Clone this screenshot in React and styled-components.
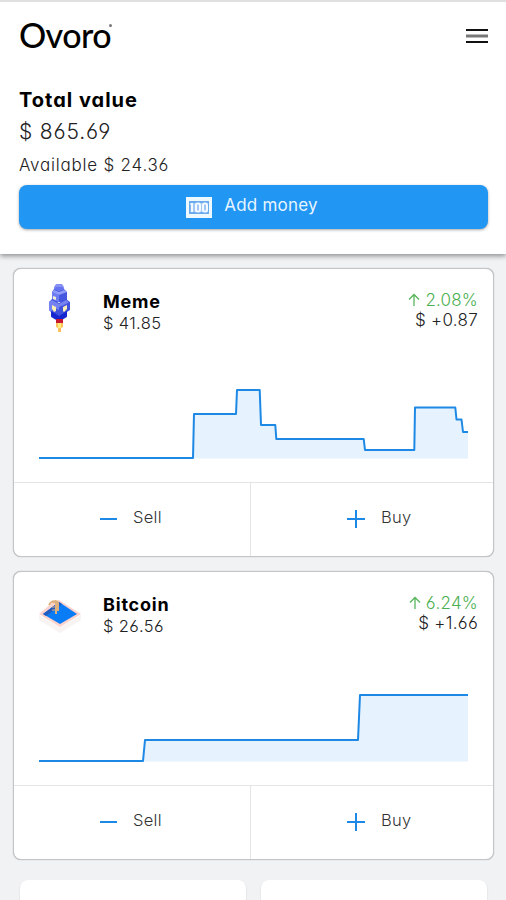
import React from "react";
import styled, { createGlobalStyle } from "styled-components";

const GlobalStyle = createGlobalStyle`
  * {
    box-sizing: border-box;
  }
  body {
    margin: 0;
    background: #f0f2f4;
    color: #111;
    font-family: Inter, "Open Sans", sans-serif;
    font-feature-settings: "cv11", "cv03", "cv04";
    font-weight: 300;
  }
`;

const Screen = styled.div`
  height: 900px;
  overflow: hidden;
`;

const HeaderWrapper = styled.header`
  height: 254px;
  padding: 0 18px 0 19px;
  background: #fff;
  border-top: 2px solid #e0e0e0;
  box-shadow: 0 2px 5px rgba(0, 0, 0, 0.42);
`;

const TopBar = styled.div`
  display: flex;
  justify-content: space-between;
  align-items: center;
  height: 68px;
  margin-bottom: 16px;
`;

const Logo = styled.div`
  display: flex;
  margin-bottom: 2px;
  font-family: Lato, sans-serif;
  font-size: 34px;
  font-weight: 500;
  line-height: 40px;
  letter-spacing: -0.6px;
  color: #000;
`;

const LogoDot = styled.i`
  width: 3px;
  height: 3px;
  margin-top: 9px;
  margin-left: -2px;
  border-radius: 50%;
  background: #777;
`;

const MenuButton = styled.button`
  display: flex;
  padding: 0;
  border: 0;
  background: none;
`;

const Text = styled.div`
  font-size: ${(props) => props.$size || 17}px;
  font-weight: ${(props) => (props.$bold ? 700 : 300)};
  line-height: ${(props) => props.$line || 22}px;
  letter-spacing: ${(props) => props.$spacing || 0}px;
  color: ${(props) => props.$color || "#222"};
  white-space: nowrap;
`;

const AddButton = styled.button`
  display: flex;
  justify-content: center;
  align-items: center;
  gap: 12px;
  width: 100%;
  height: 44px;
  margin-top: 3px;
  padding: 0 3px 0 0;
  border: 0;
  border-radius: 8px;
  background: #2196f3;
  box-shadow: 0 1px 3px rgba(0, 0, 0, 0.35);
  font-family: inherit;
  font-feature-settings: inherit;
`;

const AddLabel = styled.span`
  margin-bottom: 4px;
  font-size: 17px;
  font-weight: 400;
  line-height: 22px;
  letter-spacing: 0.2px;
  color: #e6f5ff;
`;

const CardList = styled.main`
  display: flex;
  flex-direction: column;
  gap: 14px;
  padding: 14px 12px 0 13px;
`;

const CardWrapper = styled.section`
  height: 289px;
  background: #fff;
  border: 1px solid #c3c6c8;
  border-radius: 8px;
  box-shadow: 0 0 1px rgba(0, 0, 0, 0.35);
`;

const CardHead = styled.div`
  display: flex;
  height: 101px;
  padding: 0 15px 0 25px;
`;

const AssetIcon = styled.div`
  width: 64px;
  padding-top: 11px;
`;

const AssetInfo = styled.div`
  flex: 1;
  padding-top: 22px;
`;

const AssetChange = styled.div`
  display: flex;
  flex-direction: column;
  align-items: flex-end;
  padding-top: 21px;
`;

const Rise = styled.div`
  display: flex;
  align-items: center;
  gap: 5px;
`;

const ChartWrapper = styled.div`
  height: 112px;
  padding-left: 25px;
`;

const Actions = styled.div`
  display: grid;
  grid-template-columns: 236px 1fr;
  height: 74px;
  border-top: 1px solid #e3e5e6;
`;

const Action = styled.button`
  display: flex;
  align-items: center;
  gap: 16px;
  padding: 0 0 1px ${(props) => props.$inset}px;
  border: 0;
  border-left: ${(props) => (props.$divided ? "1px solid #e3e5e6" : "0")};
  background: none;
  font-family: inherit;
  font-feature-settings: inherit;
`;

const ActionLabel = styled.span`
  margin-bottom: 4px;
  font-size: 16.5px;
  font-weight: 300;
  line-height: 22px;
  letter-spacing: 0.3px;
  color: #333;
`;

const Tiles = styled.div`
  display: grid;
  grid-template-columns: 1fr 1fr;
  gap: 15px;
  padding: 20px 19px 0 20px;
`;

const Tile = styled.div`
  height: 60px;
  border-radius: 8px;
  background: #fff;
  box-shadow: 0 1px 2px rgba(0, 0, 0, 0.14);
`;

const MenuIcon = () => (
  <svg width="22" height="16" viewBox="0 0 22 16">
    <path d="M0 1h22v2H0zM0 13h22v2H0z" fill="#111" />
    <path d="M0 6.5h22v3H0z" fill="#777" />
  </svg>
);

const MoneyIcon = () => (
  <svg width="26" height="21" viewBox="0 0 26 21">
    <path d="M0 0h26v21H0z" fill="#eef8ff" />
    <path d="M3 4h20v13H3z" fill="#6aabed" />
    <path d="M4.5 6h17v9h-17z" fill="#9fc8f5" />
    <g fill="none" stroke="#f4faff" strokeWidth="2">
      <path d="M4.5 7h1.5v8" />
      <rect x="10" y="6.5" width="4" height="8" rx="1.5" />
      <rect x="17" y="6.5" width="4" height="8" rx="1.5" />
    </g>
  </svg>
);

const RocketIcon = () => (
  <svg width="42" height="54" viewBox="0 0 42 54">
    <path d="M15 7l2-3h6l2 3v5H15z" fill="#8790f5" />
    <path d="M13 12l2-3 5 2 5-2 3 3v10H13z" fill="#4658e0" />
    <path d="M13 12l7 3v7l-7-2z" fill="#6f7df2" />
    <path d="M15 9l5 2 5-2-2-2h-6z" fill="#6673ee" />
    <path d="M13 12l7 3 8-3-3-2-5 2-5-2z" fill="#8f9cf8" />
    <path d="M10 22l3-3 7 4 7-4 4 3v8l-3 2v5l-5 3h-6l-5-3v-5l-2-2z" fill="#4052dd" />
    <path d="M10 22l3-2 7 4v6l-7-3v5l-3-2z" fill="#7482f3" />
    <path d="M12 31l8 5 8-5v5l-4 3h-8l-4-3z" fill="#1526cf" />
    <path d="M20 24l7-4 3 2-3 2-7 3-7-3v-2z" fill="#7784ef" />
    <path d="M14 16l3 1v3l-3-1z" fill="#f5efd2" />
    <path d="M13 25l4 2v4l-2 1-2-3zM24 27l4-2v4l-3 3-1-1z" fill="#fff0b6" />
    <path d="M17 39h7v4h-7z" fill="#c81831" />
    <path d="M17 43h7v4l-2 1v4h-3v-4l-2-1z" fill="#ffc15c" />
    <path d="M19 43h3v5h-3z" fill="#ffed80" />
  </svg>
);

const PoolIcon = () => (
  <svg width="42" height="54" viewBox="0 0 42 54">
    <path d="M0 32l21 12 21-12v5L21 50 0 37z" fill="#f8f4f3" />
    <path d="M0 31l14-12 6-2 22 14-21 13z" fill="#ffd3cd" />
    <path d="M4 31l16-12 18 12-17 10z" fill="#0a7cf5" />
    <path d="M4 31l16-12 3 2L7 33z" fill="#245dbd" />
    <path d="M10 22c2-4 5-5 7-2v11M14 20c2-3 5-2 5 0v8" fill="none" stroke="#dfb27d" strokeWidth="2" />
    <path d="M13 24h5M13 27h5" stroke="#d9ad88" />
  </svg>
);

const ArrowUpIcon = () => (
  <svg width="12" height="14" viewBox="0 0 12 14">
    <path d="M6 13V1.5M1 6.5l5-5 5 5" fill="none" stroke="#58b55c" strokeWidth="1.3" />
  </svg>
);

const MinusIcon = () => (
  <svg width="17" height="18" viewBox="0 0 17 18">
    <path d="M0 9h17" stroke="#1e88e5" strokeWidth="2" />
  </svg>
);

const PlusIcon = () => (
  <svg width="18" height="18" viewBox="0 0 18 18">
    <path d="M0 9h18M9 0v18" stroke="#1e88e5" strokeWidth="2" />
  </svg>
);

const Chart = ({ points }) => (
  <svg width="429" height="100" viewBox="0 0 429 100">
    <polygon points={`0,88.5 ${points} 429,88.5`} fill="#e6f3fe" />
    <polyline points={points} fill="none" stroke="#1e88e5" strokeWidth="2" strokeLinejoin="round" />
  </svg>
);

const Header = () => (
  <HeaderWrapper>
    <TopBar>
      <Logo>
        Ovoro
        <LogoDot />
      </Logo>
      <MenuButton aria-label="Menu">
        <MenuIcon />
      </MenuButton>
    </TopBar>
    <Text $size={20} $line={29} $spacing={1} $bold $color="#000">
      Total value
    </Text>
    <Text $size={21} $line={34} $spacing={0.85}>
      $ 865.69
    </Text>
    <Text $size={17} $line={33} $spacing={0.78}>
      Available $ 24.36
    </Text>
    <AddButton>
      <MoneyIcon />
      <AddLabel>Add money</AddLabel>
    </AddButton>
  </HeaderWrapper>
);

const AssetCard = ({ name, price, percent, change, icon, points }) => (
  <CardWrapper>
    <CardHead>
      <AssetIcon>{icon}</AssetIcon>
      <AssetInfo>
        <Text $size={18} $line={21} $spacing={0.8} $bold $color="#000">
          {name}
        </Text>
        <Text $size={16.5} $spacing={0.35}>
          {price}
        </Text>
      </AssetInfo>
      <AssetChange>
        <Rise>
          <ArrowUpIcon />
          <Text $line={20} $spacing={0.2} $color="#4caf50">
            {percent}
          </Text>
        </Rise>
        <Text $line={20} $spacing={0.3}>
          {change}
        </Text>
      </AssetChange>
    </CardHead>
    <ChartWrapper>
      <Chart points={points} />
    </ChartWrapper>
    <Actions>
      <Action $inset={86}>
        <MinusIcon />
        <ActionLabel>Sell</ActionLabel>
      </Action>
      <Action $inset={96} $divided>
        <PlusIcon />
        <ActionLabel>Buy</ActionLabel>
      </Action>
    </Actions>
  </CardWrapper>
);

const assets = [
  {
    name: "Meme",
    price: "$ 41.85",
    percent: "2.08%",
    change: "$ +0.87",
    icon: <RocketIcon />,
    points:
      "0,88 154,88 155,44 197,44 198,20 220.7,20 222,55 236.3,55 237.3,69 324.7,69 326,80 375.3,80 376,37.5 416.3,37.5 417.5,49.5 422.5,49.5 424,62 429,62",
  },
  {
    name: "Bitcoin",
    price: "$ 26.56",
    percent: "6.24%",
    change: "$ +1.66",
    icon: <PoolIcon />,
    points: "0,88 104,88 106,67 319,67 321,22 429,22",
  },
];

const App = () => {
  return (
    <Screen>
      <GlobalStyle />
      <Header />
      <CardList>
        {assets.map((asset) => (
          <AssetCard key={asset.name} {...asset} />
        ))}
      </CardList>
      <Tiles>
        <Tile />
        <Tile />
      </Tiles>
    </Screen>
  );
};

export default App;
